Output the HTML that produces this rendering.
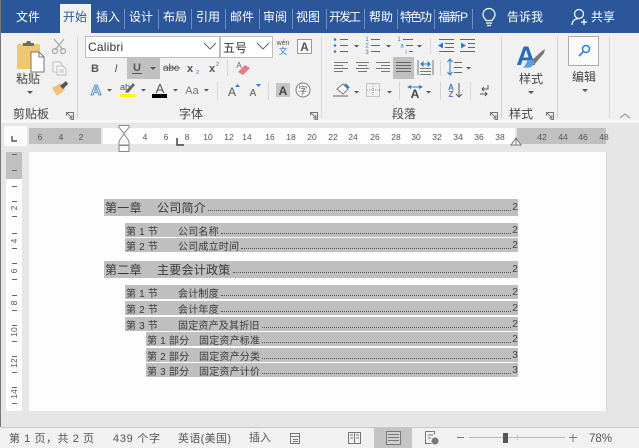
<!DOCTYPE html>
<html><head><meta charset="utf-8">
<style>
html,body{margin:0;padding:0;background:#e6e6e6;overflow:hidden}
#w{position:relative;width:639px;height:448px;overflow:hidden;filter:blur(.35px);font-family:"Liberation Sans","Noto Sans CJK SC",sans-serif}
svg{position:absolute;left:0;top:0}
text{font-family:"Liberation Sans","Noto Sans CJK SC",sans-serif}
.r{position:absolute;background:#bfbfbf;display:flex;align-items:center;color:#3a3a3a;white-space:pre;box-sizing:border-box;padding-left:1px}
.r b{font-weight:normal;display:inline-block;width:52px;flex:none}
.r u{text-decoration:none;flex:none}
.r span.l{flex:1;align-self:flex-start;height:0;border-bottom:1px dotted #555;margin:0 1px 0 2px}
.c{font-size:12px;height:17px;left:104px;width:414px;letter-spacing:.25px}
.c span.l{margin-top:11px}
.s,.p{font-size:10px;height:14px;letter-spacing:.2px}
.s span.l,.p span.l{margin-top:10px}
.s{left:125px;width:393px}
.p{left:146px;width:372px}
.r i{font-style:normal;font-size:10px;color:#444;flex:none}
</style></head><body><div id="w">
<svg width="639" height="448" viewBox="0 0 639 448" fill="none">
<rect width="639" height="448" fill="#e6e6e6"/>
<rect width="639" height="33" fill="#2b579a"/>
<rect x="0" y="33" width="639" height="87" fill="#f1f1f1"/>
<rect x="60" y="4" width="31" height="30" fill="#f1f1f1"/>
<rect x="0" y="120" width="639" height="3" fill="#f7f7f7"/>
<rect x="0" y="0" width="1" height="448" fill="#777"/>
<g stroke="#6f8fbf" stroke-width="1">
<path d="M124.500 9V29M158.500 9V29M191.500 9V29M225.500 9V29M259.500 9V29M292.500 9V29M326.500 9V29M364.500 9V29M397.500 9V29M434.500 9V29M472.500 9V29"/></g>
<g font-size="12" fill="#fff" text-anchor="middle">
<text x="28" y="21">文件</text><text x="108" y="21">插入</text><text x="141" y="21">设计</text><text x="175" y="21">布局</text><text x="208" y="21">引用</text><text x="242" y="21">邮件</text><text x="275" y="21">审阅</text><text x="308" y="21">视图</text>
<text x="345" y="21" textLength="32">开发工</text><text x="381" y="21">帮助</text><text x="416" y="21" textLength="32">特色功</text><text x="453" y="21" textLength="30">福新P</text><text x="525" y="21">告诉我</text><text x="603" y="21">共享</text>
</g>
<text x="75" y="21" font-size="12" fill="#2b579a" text-anchor="middle">开始</text>
<g stroke="#fff" stroke-width="1.200"><path d="M486 20.500c-1-2-3-3-3-6a6 6 0 0 1 12 0c0 3-2 4-3 6zM486 23h6M487 25.500h4"/>
<circle cx="579" cy="14" r="4.500"/><path d="M572 25c0-4 3-6.500 7-6.500M581 22h6M584 19v6"/></g>

<!-- group separators -->
<g stroke="#d4d4d4"><path d="M77.500 36V118M321.500 36V118M501.500 36V118M557.500 36V118M609.500 36V118"/>
<path d="M227.500 60V76M217.500 82V100M268.500 82V100M430.500 38V54M440.500 60V76M399.500 82V100M440.500 82V100M470.500 82V100"/></g>

<!-- clipboard -->
<rect x="17" y="44" width="23" height="25" rx="1.500" fill="#f0c674"/>
<path d="M23 45v-2h3l1-2h3l1 2h3v3H23z" fill="#6b6b6b"/>
<path d="M31 52h8l5 5v15H31z" fill="#fff" stroke="#777"/><path d="M39 52v5h5" stroke="#777"/>
<text x="28" y="83" font-size="12" fill="#444" text-anchor="middle">粘贴</text>
<path d="M27 91h6l-3 3z" fill="#555"/>
<g stroke="#aaa" stroke-width="1.300"><path d="M54 39l9 11M64 39l-9 11"/><circle cx="55" cy="51" r="2.500"/><circle cx="63" cy="51" r="2.500"/></g>
<g stroke="#bbb"><path d="M53 62h7l2 2v8h-9z" fill="#f7f7f7"/><path d="M57 66h6l3 3v6h-9z" fill="#f7f7f7"/><path d="M59 70h5M59 72h5"/></g>
<path d="M52 88l9-5 4 7-8 6z" fill="#eec17a"/><path d="M60 86l6-5 2 3-5 5z" fill="#555"/>
<text x="31" y="118" font-size="12" fill="#444" text-anchor="middle">剪贴板</text>
<g stroke="#777"><path d="M66.500 115.500v-3h7v7h-3M67 113l5 5M72 115v3h-3"/>
<path d="M310.500 115.500v-3h7v7h-3M311 113l5 5M316 115v3h-3"/><path d="M490.500 115.500v-3h7v7h-3M491 113l5 5M496 115v3h-3"/><path d="M546.500 115.500v-3h7v7h-3M547 113l5 5M552 115v3h-3"/></g>

<!-- font boxes -->
<rect x="85.500" y="36.500" width="134" height="21" fill="#fff" stroke="#bdbdbd"/>
<rect x="220.500" y="36.500" width="52" height="21" fill="#fff" stroke="#bdbdbd"/>
<text x="88" y="51" font-size="12" fill="#333" letter-spacing=".2">Calibri</text>
<text x="223" y="52" font-size="12" fill="#333">五号</text>
<g stroke="#666"><path d="M204 43l6 6 6-6M257 43l6 6 6-6"/></g>
<text x="283" y="45" font-size="7" fill="#555" text-anchor="middle">wén</text>
<text x="283" y="54" font-size="8.500" fill="#2b7cd3" text-anchor="middle">文</text>
<rect x="297.500" y="39.500" width="14" height="14" fill="#fafafa" stroke="#999"/>
<text x="304.500" y="51" font-size="11.500" fill="#555" text-anchor="middle" font-weight="bold">A</text>

<!-- row 2 -->
<rect x="127" y="57" width="33" height="22" fill="#c0c0c0"/>
<g fill="#555" font-size="11" text-anchor="middle">
<text x="95" y="72" font-weight="bold">B</text>
<text x="116" y="72" font-style="italic" font-family="Liberation Serif">I</text>
<text x="137" y="71" font-weight="bold">U</text>
<text x="171" y="71" font-size="10">abc</text>
<text x="190" y="72" font-weight="bold">x</text><text x="212" y="72" font-weight="bold">x</text></g>
<path d="M132 73.500h10" stroke="#555"/><path d="M163 68h17" stroke="#555"/>
<text x="196" y="74" font-size="5.500" fill="#2b7cd3">2</text><text x="216" y="66" font-size="5.500" fill="#2b7cd3">2</text>
<path d="M150 67h6l-3 3z" fill="#555"/>
<text x="239" y="68" font-size="8" fill="#666" text-anchor="middle">A</text>
<path d="M238 72l7-7 5 3-7 7z" fill="#e8798a"/>

<!-- row 3 -->
<text x="96" y="95" font-size="15" fill="#dcebf8" stroke="#3f7fc7" stroke-width=".8" text-anchor="middle" font-weight="bold">A</text>
<g fill="#555"><path d="M107 89h5l-2.500 2.500zM141 89h5l-2.500 2.500zM173 89h5l-2.500 2.500zM204 89h5l-2.500 2.500zM354 91h5l-2.500 2.500zM387 91h5l-2.500 2.500zM426 91h5l-2.500 2.500zM354 45h5l-2.500 2.500zM386 45h5l-2.500 2.500zM417 45h5l-2.500 2.500zM466 67h5l-2.500 2.500z"/></g>
<text x="125" y="90" font-size="9" fill="#555" text-anchor="middle">ab</text>
<path d="M125 92l8-9 2 2-7 8z" fill="#666"/>
<rect x="120" y="94" width="15" height="3" fill="#ffff00"/>
<text x="160" y="93" font-size="13" fill="#555" text-anchor="middle">A</text>
<rect x="152" y="94" width="15" height="4" fill="#000"/>
<text x="192" y="94" font-size="11" fill="#777" text-anchor="middle">Aa</text>
<text x="232" y="96" font-size="12" fill="#555" text-anchor="middle">A</text><path d="M235 87l2.500-3 2.500 3z" fill="#2b7cd3"/>
<text x="253" y="96" font-size="10" fill="#555" text-anchor="middle">A</text><path d="M256 84h5l-2.500 3z" fill="#2b7cd3"/>
<rect x="276" y="83" width="14" height="14" fill="#c4c4c4"/>
<text x="283" y="95" font-size="12" fill="#444" font-weight="bold" text-anchor="middle">A</text>
<circle cx="303" cy="90" r="7" fill="#fafafa" stroke="#777"/>
<text x="303" y="93.500" font-size="9" fill="#555" text-anchor="middle">字</text>
<text x="191" y="118" font-size="12" fill="#444" text-anchor="middle">字体</text>

<!-- paragraph row 1 -->
<g stroke="#666"><path d="M340 39.500h8M340 45.500h8M340 51.500h8M371 39.500h9M371 45.500h9M371 51.500h9M403 39.500h10M406 45.500h7M409 51.500h4"/>
<path d="M439 39.500h15M445 43.500h9M445 47.500h9M439 51.500h15M460 39.500h15M468 43.500h7M468 47.500h7M460 51.500h15"/></g>
<g fill="#2b7cd3"><circle cx="335" cy="39.500" r="1.300"/><circle cx="335" cy="45.500" r="1.300"/><circle cx="335" cy="51.500" r="1.300"/>
<path d="M438 45.500l5-3v6zM466 45.500l-5-3v6z"/></g>
<g fill="#2b7cd3" font-size="6" text-anchor="middle"><text x="367" y="41">1</text><text x="367" y="47.500">2</text><text x="367" y="54">3</text><text x="399" y="41">1</text><text x="402" y="47.500">a</text><text x="406" y="54">i</text></g>

<!-- paragraph row 2 -->
<rect x="393" y="57" width="21" height="22" fill="#c0c0c0"/>
<g stroke="#777"><path d="M334 62.500h14M334 65.500h9M334 68.500h14M334 71.500h9M356 62.500h13M358 65.500h9M356 68.500h13M358 71.500h9M376 62.500h14M381 65.500h9M376 68.500h14M381 71.500h9"/>
<path d="M396 62.500h15M396 65.500h15M396 68.500h15M396 71.500h15" stroke="#666"/>
<path d="M418 60v15M433 60v15M420 68.500h11M420 71.500h11M420 74.500h11"/></g>
<path d="M421 64h9M421 64l2-2v4zM430 64l-2-2v4z" stroke="#2b7cd3"/>
<g stroke="#666"><path d="M454 62.500h8M454 67.500h8M454 72.500h8"/></g>
<path d="M450 60v14M447.500 62l2.500-3 2.500 3M447.500 72l2.500 3 2.500-3" stroke="#2b7cd3"/>

<!-- paragraph row 3 -->
<path d="M337 89l6-5 5 5-5 5z" fill="#fff" stroke="#777"/><path d="M345 84l4 4" stroke="#2b7cd3" stroke-width="2"/>
<rect x="333" y="95" width="15" height="2" fill="#aaa"/>
<rect x="366.500" y="83.500" width="13" height="13" stroke="#999" stroke-dasharray="1 1"/><path d="M373 84v13M367 90h13" stroke="#999" stroke-dasharray="1 1"/>
<text x="415" y="98" font-size="12" fill="#444" text-anchor="middle" font-weight="bold">A</text>
<path d="M407 87l4-2v4zM423 87l-4-2v4z" fill="#2b7cd3"/><path d="M410 87h10" stroke="#2b7cd3"/>
<text x="451" y="90" font-size="8" fill="#2b7cd3" text-anchor="middle" font-weight="bold">A</text>
<text x="451" y="97" font-size="8" fill="#9a58c9" text-anchor="middle" font-weight="bold">Z</text>
<path d="M459 83v14M456 94l3 3 3-3" stroke="#555"/>
<path d="M488 85v4h-6M484 87l-2 2 2 2M480 94h7M485 92l2 2-2 2" stroke="#555"/>
<text x="404" y="118" font-size="12" fill="#444" text-anchor="middle">段落</text>

<!-- style -->
<text x="526" y="65" font-size="27" fill="#2b6cb8" text-anchor="middle" font-weight="bold">A</text>
<path d="M530 62l12-11 3-2-1 4-10 12z" fill="#777"/><path d="M528 60c4-1 7 1 6 4-1 3-6 5-11 3 3-1 3-5 5-7z" fill="#5aa0e0"/>
<text x="531" y="83" font-size="12" fill="#444" text-anchor="middle">样式</text>
<path d="M528 91h6l-3 3z" fill="#555"/>
<text x="521" y="118" font-size="12" fill="#444" text-anchor="middle">样式</text>
<rect x="568.500" y="36.500" width="30" height="29" fill="#fafafa" stroke="#aaa"/>
<circle cx="586" cy="49" r="3.500" stroke="#2b7cd3" stroke-width="1.500"/><path d="M583 52l-4 4" stroke="#2b7cd3" stroke-width="1.600"/>
<text x="584" y="81" font-size="12" fill="#444" text-anchor="middle">编辑</text>
<path d="M582 89h6l-3 3z" fill="#555"/>
<path d="M620 118l5-4 5 4" stroke="#888"/>

<!-- ruler -->
<rect x="4" y="126" width="23" height="20" fill="#fbfbfb"/>
<path d="M12 136v5h5" stroke="#555" stroke-width="1.400"/>
<rect x="29" y="128" width="72" height="16" fill="#c0c0c0"/>
<rect x="103" y="128" width="412" height="16" fill="#fdfdfd"/>
<rect x="517" y="128" width="89" height="16" fill="#c0c0c0"/>
<g font-size="8.500" fill="#555" text-anchor="middle">
<text x="40" y="140">6</text><text x="61" y="140">4</text><text x="81" y="140">2</text><text x="145" y="140">4</text><text x="166" y="140">6</text><text x="187" y="140">8</text><text x="208" y="140">10</text><text x="229" y="140">12</text><text x="247" y="140">14</text><text x="270" y="140">16</text><text x="291" y="140">18</text><text x="312" y="140">20</text><text x="333" y="140">22</text><text x="353" y="140">24</text><text x="375" y="140">26</text><text x="396" y="140">28</text><text x="416" y="140">30</text><text x="437" y="140">32</text><text x="458" y="140">34</text><text x="479" y="140">36</text><text x="500" y="140">38</text><text x="542" y="140">42</text><text x="563" y="140">44</text><text x="583" y="140">46</text><text x="604" y="140">48</text></g>
<path d="M119 125.500h10v2l-5 6-5-6zM119 145v-4l5-7 5 7v4zM119 145.500h10v6h-10z" fill="#fafafa" stroke="#888"/>
<path d="M177 138v7h7" stroke="#444" stroke-width="1.500"/>
<path d="M511 145l5-7 5 7z" fill="#fafafa" stroke="#777"/><path d="M516 138v7" stroke="#777"/>

<!-- page -->
<rect x="29" y="152" width="577" height="259" fill="#fdfdfd"/>
<rect x="606" y="152" width="1" height="259" fill="#d8d8d8"/>
<rect x="6" y="152" width="16" height="259" fill="#fdfdfd"/>
<rect x="6" y="152" width="16" height="27" fill="#c0c0c0"/>
<g stroke="#666"><path d="M12 154.500h5M12 170.500h5M12 186.500h5M12 201.500h5M12 216.500h5M12 233.500h5M12 248.500h5M12 263.500h5M12 279.500h5M12 295.500h5M12 310.500h5M12 325.500h5M12 341.500h5M12 356.500h5M12 372.500h5M12 387.500h5M12 403.500h5"/></g>
<g font-size="8.500" fill="#555" text-anchor="middle">
<text transform="translate(17,208) rotate(-90)">2</text><text transform="translate(17,241) rotate(-90)">4</text><text transform="translate(17,271) rotate(-90)">6</text><text transform="translate(17,303) rotate(-90)">8</text><text transform="translate(17,332) rotate(-90)">10</text><text transform="translate(17,363) rotate(-90)">12</text><text transform="translate(17,394) rotate(-90)">14</text></g>

<!-- status bar -->
<rect x="0" y="427" width="639" height="21" fill="#f1f1f1"/>
<rect x="1" y="427" width="638" height="1" fill="#c8c8c8"/>
<rect x="374" y="428" width="38" height="20" fill="#c4c4c4"/>
<g font-size="11" fill="#555">
<text x="9" y="442" textLength="85">第 1 页，共 2 页</text>
<text x="113" y="442" textLength="47">439 个字</text>
<text x="178" y="442" textLength="53">英语(美国)</text>
<text x="249" y="441" textLength="22">插入</text>
<text x="589" y="442" font-size="11.500">78%</text></g>
<g stroke="#777"><rect x="290.500" y="433.500" width="9" height="10"/><path d="M291 436.500h8M293 439.500h5M293 441.500h5"/>
<path d="M348.500 432.500h6v11h-6zM354.500 432.500h6v11h-6zM350 435h3M350 438h3M356 435h3M356 438h3"/>
<rect x="386.500" y="431.500" width="14" height="13" fill="#d0d0d0"/><path d="M388 434.500h11M388 437.500h11M388 440.500h11"/>
<path d="M425.500 431.500h9v3M425.500 431.500v12h6M428 435h5M428 438h3"/></g>
<circle cx="435" cy="441" r="3.500" fill="#777"/>
<path d="M457 437.500h7M569 437.500h8M573 434v8" stroke="#777"/>
<path d="M469 437.500h96" stroke="#bbb"/><path d="M517.500 435v5" stroke="#bbb"/>
<rect x="503" y="433" width="5" height="10" fill="#555"/>
</svg>

<div class="r c" style="top:199px"><b>第一章</b><u>公司简介</u><span class="l"></span><i>2</i></div>
<div class="r s" style="top:223px"><b>第 1 节</b><u>公司名称</u><span class="l"></span><i>2</i></div>
<div class="r s" style="top:238px"><b>第 2 节</b><u>公司成立时间</u><span class="l"></span><i>2</i></div>
<div class="r c" style="top:261px"><b>第二章</b><u>主要会计政策</u><span class="l"></span><i>2</i></div>
<div class="r s" style="top:285px"><b>第 1 节</b><u>会计制度</u><span class="l"></span><i>2</i></div>
<div class="r s" style="top:301px"><b>第 2 节</b><u>会计年度</u><span class="l"></span><i>2</i></div>
<div class="r s" style="top:317px"><b>第 3 节</b><u>固定资产及其折旧</u><span class="l"></span><i>2</i></div>
<div class="r p" style="top:332px"><b>第 1 部分</b><u>固定资产标准</u><span class="l"></span><i>2</i></div>
<div class="r p" style="top:348px"><b>第 2 部分</b><u>固定资产分类</u><span class="l"></span><i>3</i></div>
<div class="r p" style="top:363px"><b>第 3 部分</b><u>固定资产计价</u><span class="l"></span><i>3</i></div>
</div></body></html>
